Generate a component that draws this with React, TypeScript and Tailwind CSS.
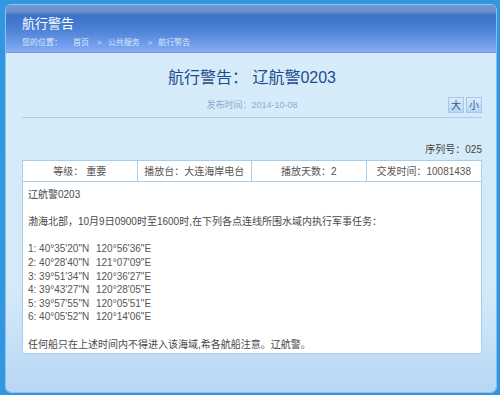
import React from "react";

const coords = [
  ["1: 40°35'20\"N", "120°56'36\"E"],
  ["2: 40°28'40\"N", "121°07'09\"E"],
  ["3: 39°51'34\"N", "120°36'27\"E"],
  ["4: 39°43'27\"N", "120°28'05\"E"],
  ["5: 39°57'55\"N", "120°05'51\"E"],
  ["6: 40°05'52\"N", "120°14'06\"E"],
];

const info = ["等级： 重要", "播放台：大连海岸电台", "播放天数：2", "交发时间：10081438"];

const FONT = "font-['Liberation_Sans','Noto_Sans_CJK_SC',sans-serif]";

const App = () => {
  return (
    <div className={`w-[500px] h-[395px] bg-[#3396e1] pt-[4px] pl-[5px] pr-[3px] pb-[2px] ${FONT}`}>
      <div className="h-full flex flex-col rounded-[6px] overflow-hidden border border-[#8cc4f0]">
        {/* header */}
        <div className="h-[48px] shrink-0 border-b border-[#7e94c6] bg-[linear-gradient(#7397d0_0px,#6b90cc_7px,#3a73c9_10px,#4a80d4_24px,#86acf6_100%)] pl-[16px] pt-[11px]">
          <div className="text-[13px] leading-[16px] text-white">航行警告</div>
          <div className="mt-[5px] text-[8px] leading-[11px] text-[#dce8fb] flex whitespace-nowrap">
            <span>您的位置：</span>
            <span className="ml-[11px]">首页</span>
            <span className="ml-[8px]">&gt;</span>
            <span className="ml-[6px]">公共服务</span>
            <span className="ml-[8px]">&gt;</span>
            <span className="ml-[6px]">航行警告</span>
          </div>
        </div>

        {/* body */}
        <div className="flex-1 bg-[linear-gradient(#d7ecfa_0%,#d4eaf9_70%,#b7d7f5_100%)] pl-[16px] pr-[14px]">
          <h1 className="mt-[14px] text-center text-[16px] leading-[22px] text-[#1f4b8e]">
            航行警告： 辽航警0203
          </h1>
          <div className="mt-[8px] grid grid-cols-[1fr_auto_1fr] items-center">
            <div />
            <div className="text-[9px] leading-[14px] text-[#8fabcb]">发布时间：2014-10-08</div>
            <div className="flex justify-end gap-[2px]">
              {["大", "小"].map((t) => (
                <span
                  key={t}
                  className="w-[16px] h-[16px] flex items-center justify-center border border-[#a8c6e6] bg-[linear-gradient(#dcebfa,#b9d4f2)] text-[10px] text-[#285a9c]"
                >
                  {t}
                </span>
              ))}
            </div>
          </div>
          <div className="mt-[4px] h-px bg-[#a9cde9]" />

          <div className="mt-[25px] text-right text-[10px] leading-[13px] text-[#444]">序列号：025</div>

          <div className="mt-[4px] bg-white border border-[#a9cde9]">
            <div className="grid grid-cols-4 h-[21px] border-b border-[#a9cde9]">
              {info.map((t, i) => (
                <div
                  key={t}
                  className={`flex items-center justify-center whitespace-nowrap text-[10px] text-[#555] ${i < 3 ? "border-r border-[#a9cde9]" : ""}`}
                >
                  {t}
                </div>
              ))}
            </div>
            <div className="px-[5px] pt-[6px] pb-[2px] text-[10px] leading-[13.6px] text-[#4a4a4a] whitespace-nowrap">
              <p>辽航警0203</p>
              <p className="mt-[13.6px]">渤海北部，10月9日0900时至1600时,在下列各点连线所围水域内执行军事任务：</p>
              <div className="mt-[13.6px] text-[#555]">
                {coords.map(([a, b]) => (
                  <div key={a} className="flex">
                    <span className="w-[68px]">{a}</span>
                    <span>{b}</span>
                  </div>
                ))}
              </div>
              <p className="mt-[13.6px]">任何船只在上述时间内不得进入该海域,希各航船注意。辽航警。</p>
            </div>
          </div>
        </div>
      </div>
    </div>
  );
};

export default App;
